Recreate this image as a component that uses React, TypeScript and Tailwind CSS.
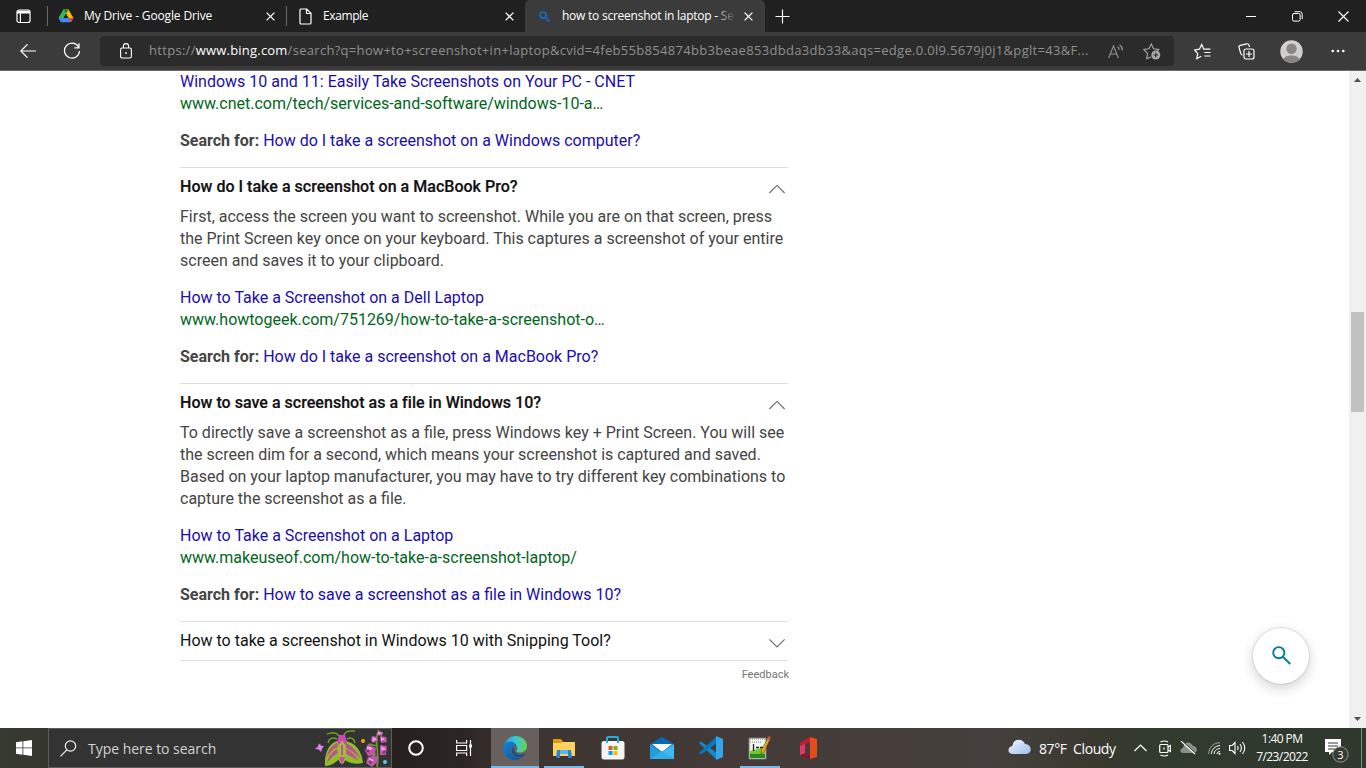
import React from "react";

const ui = "font-['Open_Sans','Noto_Sans',sans-serif]";

function Close() {
  return (
    <svg width="9" height="9" viewBox="0 0 9 9" stroke="#fff" strokeWidth="1.3" className="shrink-0">
      <path d="M.6.6l7.8 7.8M8.400.6L.6 8.400" />
    </svg>
  );
}

function TabStrip() {
  return (
    <header className="flex h-8 shrink-0 items-center bg-[#202020] text-white">
      <div className="flex w-[47px] shrink-0 justify-center">
        <svg width="15" height="15" viewBox="0 0 15 15" fill="none" stroke="#fff" strokeWidth="1.2">
          <rect x="1" y="1" width="13" height="12.5" rx="2" />
          <path d="M1 2.5h13M1 3.700h13" strokeWidth="1.6" />
          <path d="M4.400 4v9" />
        </svg>
      </div>
      <div className="h-5 w-px shrink-0 bg-[#686868]" />
      <div className="flex w-[238px] shrink-0 items-center pl-[10px] pr-[11px]">
        <svg width="16" height="16" viewBox="0 0 16 16" className="shrink-0">
          <path d="M5.500 1.400h5L8 5.700 3.100 14.200.6 9.900z" fill="#20a464" />
          <path d="M5.500 1.400L8 5.700 5.500 10H.6z" fill="#34b856" />
          <path d="M5.500 1.400h5l4.900 8.500h-5z" fill="#fbbc05" />
          <path d="M5.500 1.400h5L8 5.700z" fill="#188038" />
          <path d="M.6 9.900h14.800l-2.500 4.300H3.100z" fill="#4285f4" />
          <path d="M10.500 9.900h4.900l-2.500 4.300z" fill="#ea4335" />
          <path d="M8 5.800l2.400 4.100H5.600z" fill="#202020" />
        </svg>
        <span className="ml-[10px] flex-1 whitespace-nowrap text-[12px] tracking-[-0.14px]">My Drive - Google Drive</span>
        <Close />
      </div>
      <div className="h-5 w-px shrink-0 bg-[#686868]" />
      <div className="flex w-[238px] shrink-0 items-center pl-[12px] pr-[11px]">
        <svg width="13" height="17" viewBox="0 0 13 17" fill="none" stroke="#fff" strokeWidth="1.2" className="shrink-0">
          <path d="M2 1h5.700L12 5.300V15a1 1 0 0 1-1 1H2a1 1 0 0 1-1-1V2a1 1 0 0 1 1-1zM7.500 1v4.500H12" />
        </svg>
        <span className="ml-[11px] flex-1 whitespace-nowrap text-[12px] tracking-[-0.4px]">Example</span>
        <Close />
      </div>
      <div className="flex h-8 w-[240px] shrink-0 items-center rounded-t-[5px] bg-[#3b3b3b] pl-[14px] pr-[12px]">
        <svg width="11" height="11" viewBox="0 0 11 11" fill="none" stroke="#1170c8" strokeWidth="1.7" className="shrink-0">
          <circle cx="4.100" cy="4.100" r="3.100" />
          <path d="M6.400 6.400l3.900 3.900" />
        </svg>
        <div className="ml-[12px] flex w-[176px] whitespace-pre text-[12px] tracking-[-0.24px]">
          how to screenshot in laptop - <span className="bg-[linear-gradient(90deg,#c4c4c4,#505050)] bg-clip-text text-transparent">Se</span>
        </div>
        <div className="ml-auto flex"><Close /></div>
      </div>
      <svg width="15" height="15" viewBox="0 0 15 15" stroke="#fff" strokeWidth="1.2" className="ml-[10px] shrink-0">
        <path d="M7.500.5v14M.5 7.500h14" />
      </svg>
      <div className="ml-auto flex items-center gap-[35px] pr-[17px]">
        <svg width="10" height="10" viewBox="0 0 10 10" stroke="#fff"><path d="M0 5.500h10" /></svg>
        <svg width="11" height="11" viewBox="0 0 11 11" fill="none" stroke="#fff" className="ml-px">
          <rect x=".5" y="2.500" width="7.600" height="7.600" rx="1.500" />
          <path d="M2.600.7h5a2.600 2.600 0 0 1 2.600 2.600v4.800" />
        </svg>
        <svg width="11" height="11" viewBox="0 0 11 11" stroke="#fff" strokeWidth="1.2"><path d="M.5.5l10 10M10.500.5l-10 10" /></svg>
      </div>
    </header>
  );
}

function Toolbar() {
  return (
    <div className="flex h-[39px] shrink-0 items-center border-b border-[#6b6969] bg-[#3b3b3b] pl-[20px]">
      <svg width="16" height="14" viewBox="0 0 16 14" fill="none" stroke="#fff" strokeWidth="1.2">
        <path d="M16 7H.8M7.500.3L.8 7l6.700 6.700" />
      </svg>
      <svg width="18" height="18" viewBox="0 0 18 18" fill="none" stroke="#fff" strokeWidth="1.2" className="ml-[27px]">
        <path d="M15.700 5.200A7.500 7.500 0 1 0 16.500 9M16 1.200v4.600h-4.600" />
      </svg>
      <div className="ml-[19px] flex h-[30px] w-[1074px] shrink-0 items-center rounded-[4px] bg-[#2b2b2b] pl-[20px]">
        <svg width="12" height="16" viewBox="0 0 12 16" fill="none" stroke="#fff" strokeWidth="1.1">
          <rect x=".6" y="5" width="10.800" height="10" rx="1.500" />
          <path d="M3.400 5V3.200a2.600 2.600 0 0 1 5.200 0V5" />
          <circle cx="6" cy="10" r=".9" fill="#fff" stroke="none" />
        </svg>
        <span className="ml-[17px] w-[942px] whitespace-nowrap text-[13px] tracking-[0.303px] text-[#8f8f8f]">
          https://<span className="tracking-[0.2px] text-white">www.bing.com</span>/search?q=how+to+screenshot+in+laptop&amp;cvid=4feb55b854874bb3beae853dbda3db33&amp;aqs=edge.0.0l9.5679j0j1&amp;pglt=43&amp;F...
        </span>
        <svg width="16" height="15" viewBox="0 0 16 15" fill="none" stroke="#929292" strokeWidth="1.1" className="ml-[17px]">
          <path d="M.6 14L5.500 2l4.900 12M2.200 10h6.600M9.500 2.800c1.300.8 1.700 1.800 1.700 3.200M11.500.7c2 1.300 3 3.300 3 5.800" />
        </svg>
        <svg width="18" height="18" viewBox="0 0 18 18" fill="none" stroke="#aaa" strokeWidth="1.1" className="ml-[19px]">
          <path d="M8 15l-4.300 1.600.8-5.200L.8 7.500l5.100-.7L8.300 2l2.300 4.800 5.200.7-1.500 1.500" />
          <circle cx="12.800" cy="13" r="4.500" fill="#aaa" stroke="none" />
          <path d="M12.800 10.600v4.800M10.400 13h4.800" stroke="#2b2b2b" />
        </svg>
      </div>
      <svg width="17" height="17" viewBox="0 0 17 17" fill="none" stroke="#fff" strokeWidth="1.2" className="ml-[20px] shrink-0">
        <path d="M7.200 13.200l-4.400 2.500.9-5L.6 7l4.800-.8L7.700 1.500 9.800 6.200h6.600M10.300 9.500h6.200M10.300 13h6.200" />
      </svg>
      <svg width="17" height="17" viewBox="0 0 17 17" fill="none" stroke="#fff" strokeWidth="1.2" className="ml-[27px] shrink-0">
        <rect x="6" y="6" width="10" height="10" rx="2" />
        <path d="M11 8v6M8 11h6M4.500 12.200C3 11.800 2.800 11 2.600 10L1 4.500C.7 3.400 1.300 2.600 2.300 2.300L8.800.8c1-.2 1.900.3 2.200 1.300l.5 1.900" />
      </svg>
      <svg width="23" height="23" viewBox="0 0 23 23" className="ml-[25px] shrink-0">
        <defs><clipPath id="avatar"><circle cx="11.500" cy="11.500" r="11.200" /></clipPath></defs>
        <circle cx="11.500" cy="11.500" r="11.200" fill="#d2d0ce" />
        <g fill="#8b8683" clipPath="url(#avatar)"><circle cx="11.500" cy="8.800" r="5.200" /><ellipse cx="11.500" cy="20.500" rx="8.500" ry="5.300" /></g>
      </svg>
      <svg width="14" height="4" viewBox="0 0 14 4" fill="#fff" className="ml-[28px] shrink-0">
        <circle cx="1.700" cy="2" r="1.300" /><circle cx="7" cy="2" r="1.300" /><circle cx="12.300" cy="2" r="1.300" />
      </svg>
    </div>
  );
}

function Chevron({ down = false }: { down?: boolean }) {
  return (
    <svg width="16" height="9" viewBox="0 0 16 9" fill="none" stroke="#6c6c6c" strokeWidth="1.1" className="mr-[3px] mt-[9px] shrink-0">
      <path d={down ? "M.4.4L8 8 15.600.4" : "M.4 8L8 .4l7.600 7.600"} />
    </svg>
  );
}

function Source({ title, url, query }: { title: string; url: string; query: string }) {
  return (
    <>
      <div className="text-[#1a0dab]">{title}</div>
      <div className="text-[#006621]">{url}</div>
      <div className="mb-[15px] mt-[15px] text-[#1a0dab]">
        <b className="font-bold text-[#444]">Search for:</b> {query}
      </div>
    </>
  );
}

function Answer({ question, lines, title, url }: { question: string; lines: string[]; title: string; url: string }) {
  return (
    <section className="border-t border-[#ddd] pt-2">
      <div className="flex h-[30px] justify-between font-medium text-[#111]">
        <h2 className="tracking-[0.027px] [-webkit-text-stroke:0.2px]">{question}</h2>
        <Chevron />
      </div>
      <div className="mb-[15px] text-[#444]">{lines.map((l) => <div key={l}>{l}</div>)}</div>
      <Source title={title} url={url} query={question} />
    </section>
  );
}

function Results() {
  return (
    <main className="flex min-h-0 flex-1 bg-white">
      <div className="flex-1 overflow-hidden pl-[180px] font-['Roboto',sans-serif] text-[16px] leading-[22px]">
        <div className="w-[608px] whitespace-nowrap">
          <Source
            title="Windows 10 and 11: Easily Take Screenshots on Your PC - CNET"
            url="www.cnet.com/tech/services-and-software/windows-10-a…"
            query="How do I take a screenshot on a Windows computer?"
          />
          <Answer
            question="How do I take a screenshot on a MacBook Pro?"
            lines={[
              "First, access the screen you want to screenshot. While you are on that screen, press",
              "the Print Screen key once on your keyboard. This captures a screenshot of your entire",
              "screen and saves it to your clipboard.",
            ]}
            title="How to Take a Screenshot on a Dell Laptop"
            url="www.howtogeek.com/751269/how-to-take-a-screenshot-o…"
          />
          <Answer
            question="How to save a screenshot as a file in Windows 10?"
            lines={[
              "To directly save a screenshot as a file, press Windows key + Print Screen. You will see",
              "the screen dim for a second, which means your screenshot is captured and saved.",
              "Based on your laptop manufacturer, you may have to try different key combinations to",
              "capture the screenshot as a file.",
            ]}
            title="How to Take a Screenshot on a Laptop"
            url="www.makeuseof.com/how-to-take-a-screenshot-laptop/"
          />
          <section className="flex h-10 justify-between border-y border-[#ddd] pt-2 text-[#111]">
            <h2>How to take a screenshot in Windows 10 with Snipping Tool?</h2>
            <Chevron down />
          </section>
          <div className="-mr-px mt-[3px] text-right text-[11px] text-[#767676]">Feedback</div>
        </div>
      </div>
      <div className="flex w-24 shrink-0 flex-col justify-end pb-[44px]">
        <button className="flex size-14 items-center justify-center rounded-full bg-white pb-[2px] shadow-[0_0_0_1px_rgba(0,0,0,0.09),0_4px_12px_1px_rgba(0,0,0,0.16)]">
          <svg width="19" height="19" viewBox="0 0 19 19" fill="none" stroke="#007d93" strokeWidth="1.900">
            <circle cx="6.800" cy="6.700" r="5.600" />
            <path d="M10.800 10.700l7.400 7.300" />
          </svg>
        </button>
      </div>
      <div className="flex w-[17px] shrink-0 flex-col items-center bg-[#f0f0f0]">
        <svg width="7" height="4" viewBox="0 0 7 4" fill="#505050" className="mt-[7px]"><path d="M0 4L3.500 0 7 4z" /></svg>
        <div className="mt-[230px] h-[100px] w-[13px] bg-[#c1c1c1]" />
        <svg width="7" height="4" viewBox="0 0 7 4" fill="#505050" className="mb-[7px] mt-auto"><path d="M0 0l3.500 4L7 0z" /></svg>
      </div>
    </main>
  );
}

function MothArt() {
  return (
    <svg width="75" height="38" viewBox="0 0 75 38" className="shrink-0">
      <path d="M4 14.500l2.500 2.300 2.500.5-2 2.500-.8 3.200L3.700 20.500 0 20l2.700-2.200z" fill="#d583f5" />
      <g stroke="#6ca61d" strokeWidth="1.400" fill="none">
        <path d="M24 7C20 2 16 4 12 5M29 6C31 1 36 2 40 2M22 10c-4-2-8-1-9 4M32 10c4-2 7-1 8 4" />
      </g>
      <path d="M22 12C15 14 9 23 10 37c6 0 12-4 16-9 5 5 12 8 22 6-1-12-8-21-18-22z" fill="#8fbf25" />
      <path d="M22 14c-6 3-9 8-11 15 4-6 8-10 12-11zM31 14c6 3 11 8 15 16-5-5-10-9-15-11zM22 20c-5 3-9 8-10 14 4-6 8-8 11-10zM31 20c5 2 9 6 13 12-5-3-9-5-13-7z" fill="#c34e98" />
      <ellipse cx="27" cy="23" rx="4.200" ry="12" fill="#9bc42d" />
      <path d="M24 6h6l2 7-2 3-3-5-3 5-2-3zM26 16h2v10h-2zM24 28h6l-3 8z" fill="#d044bd" />
      <circle cx="48" cy="12" r="2" fill="#f5a910" />
      <path d="M64 1c-6 10 1 18-2 37M65 11l5 1M62 17l-8-2M61 25l-7 5" fill="none" stroke="#68a01d" strokeWidth="1.700" />
      <g fill="#c055ab">
        <path d="M63 2l5 1-1 4-5-1zM57 7l5 1 1 4-5 2-2-3zM65 7l6 1 1 5-6 1zM53 15l8 4-1 7-7 1-3-5zM65 16l7 1-1 9-6 0zM53 28l9-1 1 5-6 6-6-4z" />
      </g>
      <g fill="#f0a4e4">
        <path d="M63 3l5 1-5 2zM58 8l4 2-5 3zM66 8l4 2-4 2zM52 17l6 2-6 5zM66 17l5 3-4 3zM54 29l5 2-6 4z" />
      </g>
      <g fill="#8b327c"><circle cx="53" cy="22" r="1.800" /><circle cx="69" cy="23" r="1.700" /><circle cx="55" cy="33" r="1.800" /></g>
      <circle cx="70" cy="33" r="2" fill="#57cce7" />
    </svg>
  );
}

function AppSlot({ children, state = "" }: { children: React.ReactNode; state?: "" | "open" | "active" }) {
  return (
    <div
      className={
        state === "active"
          ? "flex h-10 w-12 items-center justify-center border-b-2 border-[#76b9ed] bg-[#66605e] pt-[2px]"
          : state === "open"
            ? "mx-[4.500px] flex h-10 w-10 items-center justify-center border-b-2 border-[#76b9ed] pt-[2px]"
            : "flex h-10 w-[49px] items-center justify-center"
      }
    >
      {children}
    </div>
  );
}

function Apps() {
  return (
    <div className="flex shrink-0">
      <AppSlot state="active">
        <svg width="24" height="24" viewBox="0 0 24 24">
          <defs>
            <linearGradient id="edgeTop" x1="0" x2="1"><stop stopColor="#259bd8" /><stop offset=".5" stopColor="#39c7d4" /><stop offset="1" stopColor="#65d547" /></linearGradient>
            <linearGradient id="edgeLow" x1="0" y1="0" x2="1" y2="1"><stop stopColor="#1683d0" /><stop offset="1" stopColor="#0752a0" /></linearGradient>
          </defs>
          <path d="M1 10C2 4 7 0 12.500 0 19 0 24 4.500 24 10c0 4-3 6.500-7 6.500-2 0-4-.8-3.400-1.700C16 11 12 6.500 7.500 6.500 4 6.500 1.800 8 1 10z" fill="url(#edgeTop)" />
          <path d="M0 12C0 7.500 4 5.400 8 5.800c3 .3 5 2.200 5.500 4.200C9 9 6.300 13 8 17c1.600 4 6 6 10.500 4.700C11 27 0 22 0 12z" fill="url(#edgeLow)" />
          <path d="M10.500 10.500C6.500 13 9.200 22 17 21.500c2 0 4.800-2.500 5-4-5 3-12 1-11.500-7z" fill="#124f99" />
        </svg>
      </AppSlot>
      <AppSlot state="open">
        <svg width="22" height="19" viewBox="0 0 22 19">
          <path d="M0 1h8l2 2h12v14H0z" fill="#ffd260" /><path d="M0 0h8l2 3-2 1H0z" fill="#d99b13" />
          <path d="M4 11h14l1 8h-4v-4H7v4H3z" fill="#2385cf" /><path d="M7 11h8v4H7z" fill="#5bb3ef" />
        </svg>
      </AppSlot>
      <AppSlot>
        <svg width="24" height="24" viewBox="0 0 24 24">
          <path d="M6 7V2q0-1 1-1h9q1 0 1 1v5" fill="none" stroke="#22aee1" strokeWidth="2" />
          <rect x=".5" y="5" width="23" height="18.500" rx="2.500" fill="#f4f4f4" />
          <path d="M7.500 10h4v4h-4z" fill="#f25022" /><path d="M12.500 10h4v4h-4z" fill="#7fba00" /><path d="M7.500 15h4v4h-4z" fill="#00a4ef" /><path d="M12.500 15h4v4h-4z" fill="#ffb900" />
          <path d="M6 7V5M17 7V5" stroke="#22aee1" strokeWidth="2" />
        </svg>
      </AppSlot>
      <AppSlot>
        <svg width="24" height="22" viewBox="0 0 24 22"><path d="M0 7L12 0l12 7v5H0z" fill="#0869ba" /><path d="M2 7h20L12 15z" fill="#fff" /><path d="M0 7l12 8L24 7v15H0z" fill="#229ddc" /><path d="M12 15L24 7v15z" fill="#41b8ee" /><path d="M0 22l12-8 12 8z" fill="#30aee9" /></svg>
      </AppSlot>
      <AppSlot>
        <svg width="24" height="24" viewBox="0 0 24 24"><path d="M0 7l2-1.500L18 17v7z" fill="#1687cf" /><path d="M0 17l2 1.500L18 7V0z" fill="#0878bd" /><path d="M17 0l7 3v18l-7 3z" fill="#34a5eb" /></svg>
      </AppSlot>
      <AppSlot state="open">
        <svg width="23" height="24" viewBox="0 0 23 24"><path d="M1 2h17v21H1z" fill="#f0f4ed" stroke="#777" /><path d="M2 15l15-4v11H2z" fill="#78c52e" /><path d="M2 18h15v4H2z" fill="#218b22" /><path d="M2 3h15M2 6h11" stroke="#888" strokeDasharray="1 1" /><path d="M5.500 8v7M8 11.500h3M12 11.500h3" stroke="#222" strokeWidth="1.300" /><path d="M20 2l2 1-6 13-3 2 .5-4z" fill="#f0ae19" stroke="#765321" strokeWidth=".7" /><path d="M20 0l3 1-1 3-3-1z" fill="#be5147" /></svg>
      </AppSlot>
      <AppSlot>
        <svg width="18" height="22" viewBox="0 0 18 22"><path d="M10 0l7 2v18l-7 2V0z" fill="#e64b18" /><path d="M0 6l10-6v5L5 7v10l-5 1z" fill="#c91930" /><path d="M0 18l5-1 5 1v4z" fill="#8e0e35" /><path d="M0 9l5-2v9l-5 2z" fill="#df3a63" /></svg>
      </AppSlot>
    </div>
  );
}

function Tray() {
  return (
    <div className="ml-auto flex h-10 w-[358px] shrink-0 items-center text-white">
      <svg width="23" height="16" viewBox="0 0 23 16" className="mb-[2px]">
        <defs><linearGradient id="cloud" x2="1" y2="1"><stop stopColor="#f4f7ff" /><stop offset="1" stopColor="#9bbdea" /></linearGradient></defs>
        <path d="M5 15C-1 15-1 8 4.500 7 5-1 15-1 17 5c7 0 8 10 1 10z" fill="url(#cloud)" />
      </svg>
      <span className="ml-[8px] w-[81px] whitespace-pre text-[14px] tracking-[-0.4px]">87°F  Cloudy</span>
      <svg width="13" height="8" viewBox="0 0 13 8" fill="none" stroke="#fff" strokeWidth="1.200" className="ml-[14px]"><path d="M.5 7l6-6 6 6" /></svg>
      <svg width="12" height="17" viewBox="0 0 12 17" fill="none" stroke="#fff" strokeWidth="1.200" className="ml-[12px]"><path d="M1.500 2q3.700-2 7.500 0M1.500 15q3.700 2 7.500 0M9 7l2.400-1.500v6L9 10" /><rect x=".7" y="4.500" width="8.300" height="8" rx="1" /><path d="M5 7.500v2" /></svg>
      <svg width="17" height="14" viewBox="0 0 17 14" className="ml-[9px]"><path d="M3 12C-1 12 0 7 3 7c1-7 8-7 10-2 5 0 5 7 1 7z" fill="#8c8f8a" /><path d="M2 0l14 13" stroke="#2f382d" strokeWidth="1.300" /><path d="M1 0l14 13" stroke="#fff" strokeWidth="1.100" /></svg>
      <svg width="13" height="13" viewBox="0 0 13 13" fill="none" className="ml-[11px]"><g stroke="#a4a8a3"><path d="M.7 12C1 5 5 1 12 .7" /></g><path d="M3.300 12C4 7 7 4 12 3.500M6 12c.5-3 2-5 6-5.500M9 12c0-1.500 1.500-2.500 3-2.500" stroke="#fff" /><circle cx="11.500" cy="11.700" r="1" fill="#fff" /></svg>
      <svg width="17" height="14" viewBox="0 0 17 14" fill="none" stroke="#fff" strokeWidth="1.100" className="ml-[8px]"><path d="M.6 4.500h2.600L6 1.500v11L3.200 9.500H.6zM8.500 5q1.200 2 0 4M11 3q2.800 4 0 8M13.500 1q4.500 6 0 12" /></svg>
      <div className="ml-[9px] flex w-[54px] flex-col items-center whitespace-nowrap text-[12px] leading-[18px] tracking-[-0.58px]"><span>1:40 PM</span><span>7/23/2022</span></div>
      <svg width="25" height="25" viewBox="0 0 25 25" className="ml-[16px] mt-[6px]">
        <path d="M0 0h16v13H7l-3 3v-3H0z" fill="#fff" /><path d="M3 4h10M3 7h10M3 10h8" stroke="#30372e" />
        <circle cx="15.500" cy="15.500" r="7.700" fill="#363c34" stroke="#92968f" />
        <text x="15.500" y="19.500" fill="#fff" textAnchor="middle" fontSize="11" fontFamily="Open Sans">3</text>
      </svg>
      <div className="ml-auto mr-[4px] h-10 w-px bg-[#858a81]" />
    </div>
  );
}

function Taskbar() {
  return (
    <footer className="flex h-10 shrink-0 items-center bg-[linear-gradient(90deg,#383b31_0px,#34362e_48px,#26211f_392px,#2b2523_460px,#3c3431_510px,#443b38_760px,#45403d_990px,#3a3930_1090px,#303a2d_1160px,#2e382d_1366px)]">
      <div className="flex w-12 shrink-0 justify-center">
        <svg width="16" height="16" viewBox="0 0 16 16" fill="#fff"><path d="M0 2.200L6.500 1.300v6.200H0zM7.300 1.200L16 0v7.500H7.300zM0 8.300h6.500v6.400L0 13.800zM7.300 8.300H16V16l-8.700-1.200z" /></svg>
      </div>
      <div className="flex h-10 w-[344px] shrink-0 items-center border border-[#5c5c5b] bg-[#333] pl-[11px] pr-[1px]">
        <svg width="17" height="17" viewBox="0 0 17 17" fill="none" stroke="#f0f0f0" strokeWidth="1.200"><circle cx="10.500" cy="6" r="5.200" /><path d="M6.800 9.800L.5 16.300" /></svg>
        <span className="ml-[11px] flex-1 whitespace-nowrap text-[14px] tracking-[-0.03px] text-[#d2d2d2]">Type here to search</span>
        <MothArt />
      </div>
      <svg width="16" height="16" viewBox="0 0 16 16" className="ml-[16px] shrink-0"><circle cx="8" cy="8" r="6.800" fill="none" stroke="#fff" strokeWidth="2" /></svg>
      <svg width="17" height="16" viewBox="0 0 17 16" fill="none" stroke="#fff" strokeWidth="1.200" className="ml-[32px] mr-[18px] shrink-0"><path d="M.6 0v3h10V0M.6 16v-3h10v3M14.500 0v16" /><path d="M.6 5.500h10v5H.6z" /><path d="M13.200 4.500H16v3h-2.800z" fill="#fff" stroke="none" /></svg>
      <Apps />
      <Tray />
    </footer>
  );
}

export default function App() {
  return (
    <div className={`flex h-[768px] w-[1366px] flex-col overflow-hidden ${ui}`}>
      <TabStrip />
      <Toolbar />
      <Results />
      <Taskbar />
    </div>
  );
}
